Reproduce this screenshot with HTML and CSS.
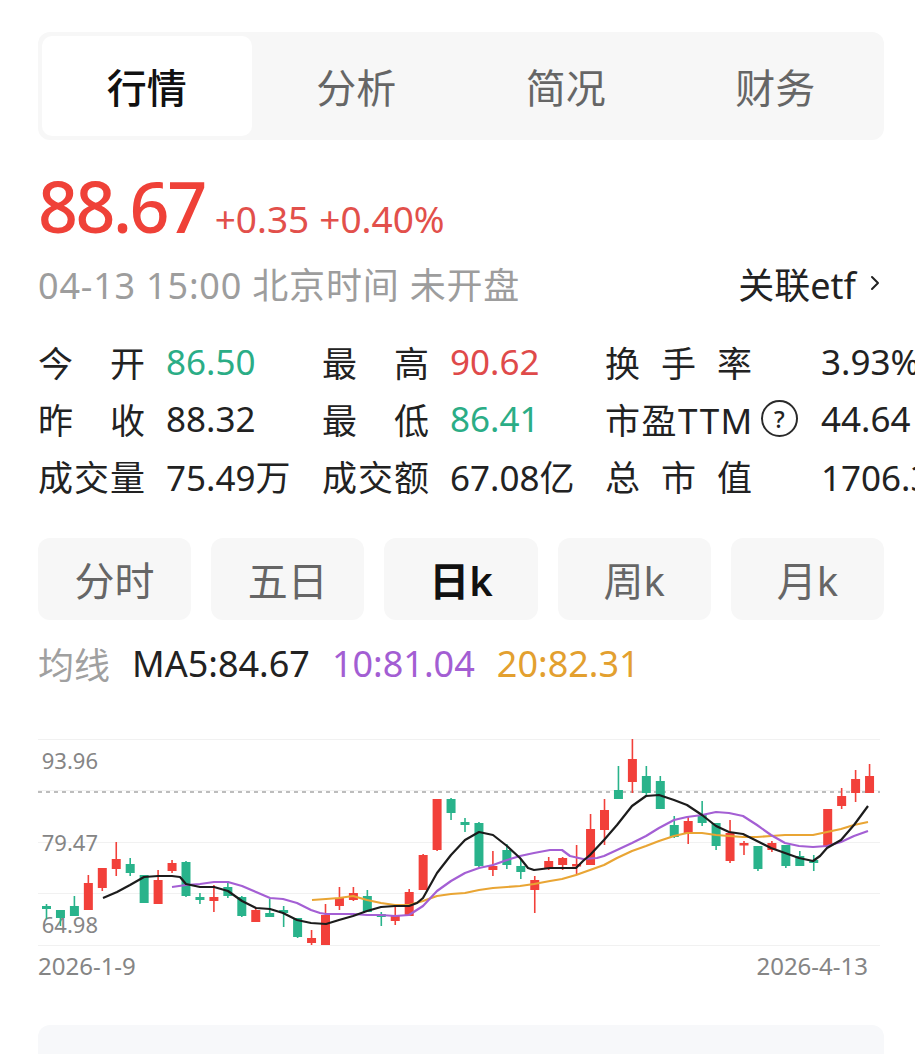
FILE: index.html
```html
<!DOCTYPE html>
<html lang="zh-CN">
<head>
<meta charset="utf-8">
<title>行情</title>
<link rel="stylesheet" href="styles.css">
</head>
<body>
<div class="page">
  <div class="tabs">
    <div class="tab active">行情</div>
    <div class="tab">分析</div>
    <div class="tab">简况</div>
    <div class="tab">财务</div>
  </div>

  <div class="price-row">
    <span class="price">88.67</span>
    <span class="change">+0.35</span>
    <span class="change">+0.40%</span>
  </div>

  <div class="time-row">
    <span class="time">04-13 15:00 北京时间 未开盘</span>
    <span class="etf">关联etf<svg class="chev" width="10" height="16" viewBox="0 0 10 16"><polyline points="2,2 8,8 2,14" fill="none" stroke="#222" stroke-width="2" stroke-linecap="round" stroke-linejoin="round"/></svg></span>
  </div>

  <div class="stats">
    <div class="lab j">今开</div><div class="val green">86.50</div>
    <div class="lab j">最高</div><div class="val red">90.62</div>
    <div class="lab3"><span class="j w3">换手率</span></div><div class="val">3.93%</div>

    <div class="lab j">昨收</div><div class="val">88.32</div>
    <div class="lab j">最低</div><div class="val green">86.41</div>
    <div class="lab3"><span class="pe">市盈TTM</span><span class="qmark">?</span></div><div class="val">44.64</div>

    <div class="lab j">成交量</div><div class="val">75.49万</div>
    <div class="lab j">成交额</div><div class="val">67.08亿</div>
    <div class="lab3"><span class="j w3">总市值</span></div><div class="val">1706.34亿</div>
  </div>

  <div class="periods">
    <div class="period">分时</div>
    <div class="period">五日</div>
    <div class="period active">日k</div>
    <div class="period">周k</div>
    <div class="period">月k</div>
  </div>

  <div class="ma-row">
    <span class="ma-title">均线</span>
    <span class="ma5">MA5:84.67</span>
    <span class="ma10">10:81.04</span>
    <span class="ma20">20:82.31</span>
  </div>

  <svg class="chart" width="846" height="250" viewBox="38 735 846 250">
    <g stroke="#f1f1f1" stroke-width="1">
      <line x1="38" y1="741.5" x2="880" y2="741.5"/>
      <line x1="38" y1="792.5" x2="880" y2="792.5"/>
      <line x1="38" y1="844.5" x2="880" y2="844.5"/>
      <line x1="38" y1="895.5" x2="880" y2="895.5"/>
      <line x1="38" y1="947.5" x2="880" y2="947.5"/>
    </g>
    <line x1="38" y1="794" x2="880" y2="794" stroke="#a8a8a8" stroke-width="1.6" stroke-dasharray="4 4"/>
    <g class="axis">
      <text x="98" y="771" text-anchor="end">93.96</text>
      <text x="98" y="853" text-anchor="end">79.47</text>
      <text x="98" y="935" text-anchor="end">64.98</text>
      <text class="date" x="38" y="977">2026-1-9</text>
      <text class="date" x="868" y="977" text-anchor="end">2026-4-13</text>
    </g>
    <g id="candles"></g>
    <polyline fill="none" stroke="#e9a534" stroke-width="2.2" stroke-linejoin="round" points="312,902 326,901 339,900 353,898 367,902 381,905 395,907 409,907 423,903 437,898 451,896 465,895 479,892 493,890 507,889 520,888 534,886 550,883 562,881 576,877 590,872 604,867 617,860 632,853 646,848 659,843 674,838 687,835 702,835 716,837 729,838 743,839 757,839 771,838 785,837 799,837 813,837 827,834 841,831 854,827 868,824"/>
    <polyline fill="none" stroke="#a45fd4" stroke-width="2.2" stroke-linejoin="round" points="172,889 186,887 200,886 214,884 228,884 242,888 256,894 270,900 283,901 297,905 311,912 320,915 326,916 339,916 353,916 367,917 381,917 395,918 409,917 423,908 437,893 451,883 465,875 479,870 493,867 507,862 520,858 534,855 550,852 562,852 570,858 583,861 597,860 604,858 617,852 632,845 646,838 659,830 674,822 687,819 702,817 716,814 729,815 743,818 757,827 771,837 785,845 799,848 813,849 827,848 841,844 854,838 868,833"/>
    <polyline fill="none" stroke="#1c1c1c" stroke-width="2.2" stroke-linejoin="round" points="103,900 117,894 130,887 144,879 158,878 172,878 180,879 186,886 200,889 214,889 228,893 242,903 256,910 270,911 283,915 297,922 311,925 326,926 339,922 353,918 367,913 381,909 395,908 409,908 417,905 423,900 437,875 451,857 465,842 479,834 493,837 507,848 520,860 528,870 534,872 550,870 562,870 576,870 583,863 590,857 604,842 617,827 632,808 646,798 659,797 674,802 687,807 702,817 716,828 729,834 743,836 757,843 771,850 785,855 799,860 813,863 820,858 827,850 841,842 854,827 868,808"/>
  </svg>

  <div class="bottom-card"></div>
</div>
<script src="chart.js"></script>
</body>
</html>
```

FILE: styles.css
```css
html, body {
  margin: 0;
  padding: 0;
  background: #ffffff;
  overflow: hidden;
}
body {
  font-family: "Noto Sans", "Noto Sans CJK SC", sans-serif;
  color: #222;
}
.page {
  width: 846px;
  padding: 32px 0 0 38px;
}
.tabs {
  display: flex;
  height: 108px;
  padding: 4px;
  box-sizing: border-box;
  background: #f7f7f7;
  border-radius: 12px;
}
.tab {
  flex: 1;
  display: flex;
  align-items: center;
  justify-content: center;
  font-size: 40px;
  color: #666;
  border-radius: 10px;
}
.tab.active {
  background: #ffffff;
  color: #111;
  font-weight: 500;
}
.price-row {
  display: flex;
  align-items: baseline;
  margin-top: 31px;
  height: 70px;
  line-height: 70px;
}
.price {
  font-size: 70px;
  font-weight: 500;
  color: #ef4138;
  letter-spacing: -2.5px;
}
.change {
  font-size: 37px;
  color: #e2504b;
  margin-left: 10px;
}
.time-row {
  display: flex;
  justify-content: space-between;
  align-items: center;
  margin-top: 22px;
  height: 40px;
  font-size: 36px;
}
.time {
  color: #9d9d9d;
  letter-spacing: 0.8px;
}
.etf {
  display: flex;
  align-items: center;
  color: #222;
  padding-right: 4px;
}
.chev {
  margin-left: 14px;
}
.stats {
  display: grid;
  grid-template-columns: 128px 156px 128px 155px 216px max-content;
  grid-auto-rows: 57px;
  align-items: center;
  margin-top: 30px;
  font-size: 35px;
  white-space: nowrap;
}
.lab, .lab3 {
  color: #222;
}
.j {
  display: block;
  width: 107px;
  text-align: justify;
  text-align-last: justify;
}
.lab3 {
  display: flex;
  align-items: center;
}
.w3 {
  width: 147px;
}
.pe {
  letter-spacing: 1.5px;
}
.qmark {
  display: inline-flex;
  align-items: center;
  justify-content: center;
  width: 33px;
  height: 33px;
  margin-left: 7px;
  border: 2.5px solid #2a2a2a;
  border-radius: 50%;
  font-size: 24px;
  font-weight: 500;
  line-height: 1;
}
.val {
  color: #222;
}
.green {
  color: #2bad86;
}
.red {
  color: #df4a4a;
}
.periods {
  display: flex;
  gap: 20px;
  margin-top: 34px;
  height: 82px;
}
.period {
  flex: 1;
  display: flex;
  align-items: center;
  justify-content: center;
  background: #f7f7f7;
  border-radius: 12px;
  font-size: 40px;
  color: #666;
}
.period.active {
  color: #111;
  font-weight: 600;
}
.ma-row {
  display: flex;
  align-items: center;
  gap: 22px;
  margin-top: 21px;
  height: 44px;
  font-size: 36px;
}
.ma-title {
  color: #a0a0a0;
}
.ma5 {
  color: #222;
}
.ma10 {
  color: #a35ed3;
}
.ma20 {
  color: #e3a02f;
}
.chart {
  display: block;
  margin-top: 48px;
}
.axis text {
  font-family: "Noto Sans", sans-serif;
  font-size: 22px;
  fill: #858585;
}
.axis text.date {
  font-size: 24px;
}
.bottom-card {
  margin-top: 42px;
  height: 60px;
  background: #f7f8fa;
  border-radius: 12px;
}
```

FILE: chart.js
```js
(function () {
  var data = [
    ["g",908,911,906,921],["g",912,920,912,928],["g",908,918,898,918],["r",885,912,877,912],
    ["r",870,890,870,893],["r",861,871,844,878],["g",866,875,860,878],["g",877,905,877,905],
    ["r",882,906,872,906],["r",865,873,862,875],["g",864,898,863,899],["g",899,902,895,906],
    ["r",899,903,887,914],["g",889,898,883,900],["g",899,918,898,919],["r",912,924,910,924],
    ["g",915,919,901,919],["g",912,915,908,929],["g",920,939,920,940],["r",940,945,932,947],
    ["r",917,947,906,947],["r",900,908,889,912],["r",895,902,889,903],["g",898,914,892,914],
    ["g",916,919,914,928],["r",918,923,908,927],["r",894,918,891,918],["r",857,892,856,892],
    ["r",801,852,801,853],["g",801,815,800,822],["g",824,827,820,834],["g",825,868,824,869],
    ["r",868,872,853,878],["g",852,867,846,871],["g",868,874,862,881],["r",882,892,878,915],
    ["r",863,870,859,872],["r",860,867,859,872],["r",866,868,847,877],["r",831,867,816,867],
    ["r",812,832,801,847],["g",792,801,768,801],["r",761,784,741,795],["g",778,795,768,797],
    ["g",783,811,778,811],["g",827,839,818,840],["r",823,835,818,846],["g",817,825,803,828],
    ["g",825,848,825,852],["r",835,863,822,865],["r",845,847,843,857],["g",848,871,848,873],
    ["r",845,852,843,854],["g",847,868,847,870],["g",858,868,853,868],["g",862,865,857,873],
    ["r",811,848,811,848],["r",798,808,790,811],["r",781,795,772,804],["r",778,795,766,795]
  ];
  var ns = "http://www.w3.org/2000/svg";
  var g = document.getElementById("candles");
  data.forEach(function (d, i) {
    var x = 46.5 + 13.95 * i;
    var col = d[0] === "r" ? "#f2403a" : "#29b38b";
    var w = document.createElementNS(ns, "line");
    w.setAttribute("x1", x); w.setAttribute("x2", x);
    w.setAttribute("y1", d[3]); w.setAttribute("y2", d[4]);
    w.setAttribute("stroke", col); w.setAttribute("stroke-width", "1.6");
    g.appendChild(w);
    var r = document.createElementNS(ns, "rect");
    var h = Math.max(d[2] - d[1], 2.5);
    r.setAttribute("x", x - 4.5); r.setAttribute("y", d[1]);
    r.setAttribute("width", 9); r.setAttribute("height", h);
    r.setAttribute("fill", col);
    g.appendChild(r);
  });
})();
```
